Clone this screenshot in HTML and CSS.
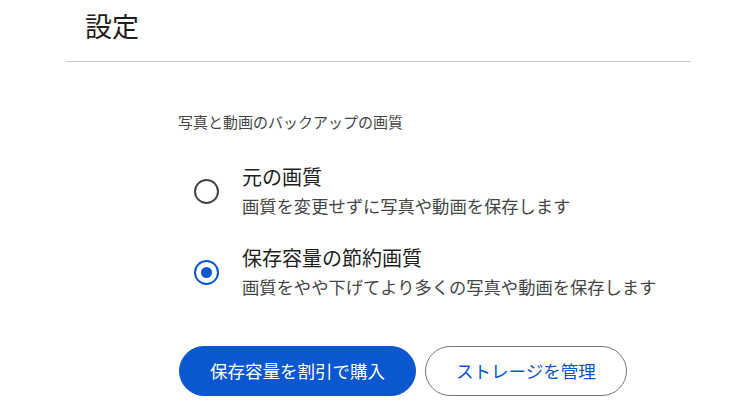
FILE: index.html
```html
<!DOCTYPE html>
<html lang="ja">
<head>
<meta charset="utf-8">
<title>設定</title>
<link rel="stylesheet" href="styles.css">
</head>
<body>
<header class="header">
  <h1 class="title">設定</h1>
</header>
<main class="content">
  <p class="section-label">写真と動画のバックアップの画質</p>
  <div class="options" role="radiogroup">
    <div class="option" role="radio" aria-checked="false">
      <span class="radio"></span>
      <div class="option-text">
        <div class="option-title">元の画質</div>
        <div class="option-desc">画質を変更せずに写真や動画を保存します</div>
      </div>
    </div>
    <div class="option" role="radio" aria-checked="true">
      <span class="radio radio-checked"><span class="radio-dot"></span></span>
      <div class="option-text">
        <div class="option-title">保存容量の節約画質</div>
        <div class="option-desc">画質をやや下げてより多くの写真や動画を保存します</div>
      </div>
    </div>
  </div>
  <div class="actions">
    <button class="btn btn-filled">保存容量を割引で購入</button>
    <button class="btn btn-outline">ストレージを管理</button>
  </div>
</main>
</body>
</html>
```
FILE: styles.css
```css
html, body {
  margin: 0;
  padding: 0;
  background: #ffffff;
}
body {
  font-family: "Noto Sans CJK JP", "Noto Sans", sans-serif;
  color: #1f1f1f;
}
.header {
  margin-left: 66px;
  width: 625px;
  height: 62px;
  border-bottom: 1px solid #c7c7c7;
  padding-left: 19px;
  box-sizing: border-box;
}
.title {
  margin: 0;
  font-size: 27px;
  font-weight: 400;
  line-height: 52px;
  color: #1f1f1f;
}
.content {
  padding-left: 178px;
  padding-top: 50px;
}
.section-label {
  margin: 0;
  font-size: 15px;
  line-height: 20px;
  color: #444746;
}
.options {
  display: flex;
  flex-direction: column;
  gap: 23px;
  margin-top: 30px;
}
.option {
  display: flex;
  align-items: center;
  padding-left: 16px;
}
.radio {
  width: 25px;
  height: 25px;
  box-sizing: border-box;
  border: 2px solid #444746;
  border-radius: 50%;
  display: flex;
  align-items: center;
  justify-content: center;
  flex-shrink: 0;
  margin-right: 23px;
}
.radio-checked {
  border-color: #0b57d0;
  border-width: 2.5px;
}
.radio-dot {
  width: 11px;
  height: 11px;
  border-radius: 50%;
  background: #0b57d0;
}
.option-text {
  display: flex;
  flex-direction: column;
}
.option-title {
  font-size: 20px;
  line-height: 30px;
  color: #1f1f1f;
}
.option-desc {
  font-size: 17.3px;
  line-height: 28px;
  color: #444746;
}
.actions {
  display: flex;
  gap: 9px;
  margin-top: 45px;
  margin-left: 1px;
}
.btn {
  height: 50px;
  border-radius: 25px;
  padding: 0 30px;
  font-family: inherit;
  font-size: 17.5px;
  line-height: 1;
  cursor: pointer;
}
.btn-filled {
  background: #0b57d0;
  color: #ffffff;
  border: 1px solid #0b57d0;
}
.btn-outline {
  background: #ffffff;
  color: #0b57d0;
  border: 1px solid #747775;
}
```
